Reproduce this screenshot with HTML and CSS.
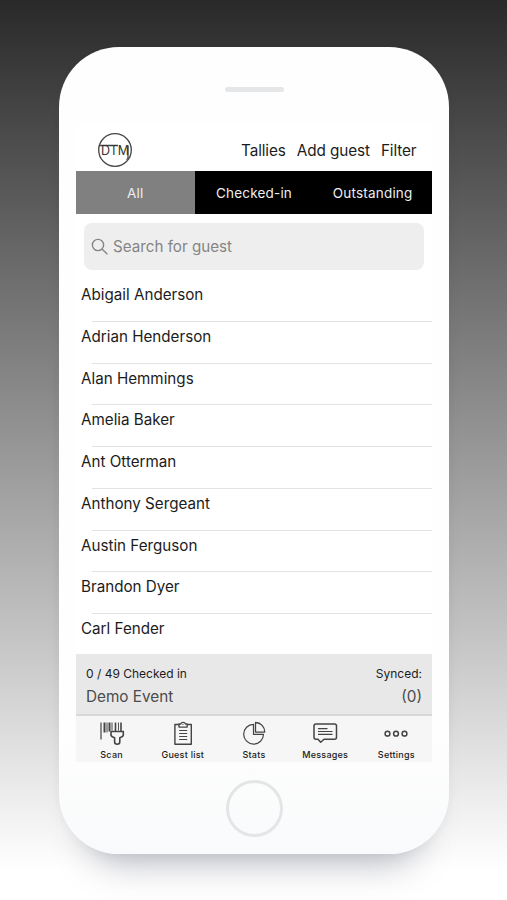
FILE: index.html
```html
<!DOCTYPE html>
<html lang="en">
<head>
<meta charset="utf-8">
<title>Guest list</title>
<link rel="stylesheet" href="styles.css">
</head>
<body>
<main class="phone">
  <div class="speaker"></div>
  <section class="screen">
    <header class="header">
      <svg class="logo" width="36" height="36" viewBox="0 0 36 36">
        <circle cx="18" cy="18" r="16.3"/>
        <path d="M1.800 13.500H21M31 13.500v13l-1.500 1"/>
        <text x="4" y="22.700" textLength="28" lengthAdjust="spacingAndGlyphs">DTM</text>
      </svg>
      <nav class="actions"><a>Tallies</a><a>Add guest</a><a>Filter</a></nav>
    </header>
    <div class="tabs">
      <div class="tab active">All</div>
      <div class="tab">Checked-in</div>
      <div class="tab">Outstanding</div>
    </div>
    <div class="search">
      <svg width="18" height="18" viewBox="0 0 18 18"><circle cx="7" cy="7" r="5.6"/><path d="M11 11l5.4 5.2"/></svg>
      <span>Search for guest</span>
    </div>
    <ul class="guests">
      <li>Abigail Anderson</li>
      <li>Adrian Henderson</li>
      <li>Alan Hemmings</li>
      <li>Amelia Baker</li>
      <li>Ant Otterman</li>
      <li>Anthony Sergeant</li>
      <li>Austin Ferguson</li>
      <li>Brandon Dyer</li>
      <li>Carl Fender</li>
    </ul>
    <div class="status">
      <div class="status-line small"><span>0 / 49 Checked in</span><span>Synced:</span></div>
      <div class="status-line large"><span>Demo Event</span><span>(0)</span></div>
    </div>
    <nav class="toolbar">
      <a class="tool">
        <svg width="26" height="26" viewBox="0 0 26 26">
          <path d="M2 2.500v17" stroke-width="1.200"/>
          <path d="M5.500 2.500v10M10.500 2.500v9" stroke-width="2"/>
          <path d="M8 2.500v10M13 2.500v8" stroke-width="1"/>
          <path d="M16.500 2.500v8.500M22 2.500v8.500" stroke-width="1.600"/>
          <path d="M19.500 2.500v8" stroke-width=".9"/>
          <path d="M12 11.500h12.300v3.500q0 1.500-3.500 2.800v4q0 2.400-2.600 2.400t-2.600-2.400v-4q-3.600-1.300-3.600-2.800z" stroke-width="1.600"/>
        </svg>
        <span>Scan</span>
      </a>
      <a class="tool">
        <svg width="26" height="26" viewBox="0 0 26 26">
          <path d="M9 4.500H4.900v19.800h16.400V4.500H17.200" stroke-width="1.400"/>
          <path d="M9 4h1.800q.3-1.600 2.300-1.600t2.300 1.600h1.800v3.100H9zM13 4v.8" stroke-width="1.300"/>
          <path d="M9.200 10.500h8M9.200 13.500h8M9.200 16.500h8M9.200 19.500h8" stroke-width="1.200"/>
        </svg>
        <span>Guest list</span>
      </a>
      <a class="tool">
        <svg width="26" height="26" viewBox="0 0 26 26">
          <path d="M12.500 4.300A9.900 9.900 0 1 0 22.500 14.300H12.500z" stroke-width="1.200"/>
          <path d="M14.500 2.500v9.600h9.200A9.300 9.300 0 0 0 14.500 2.500z" stroke-width="1.300"/>
        </svg>
        <span>Stats</span>
      </a>
      <a class="tool">
        <svg width="26" height="26" viewBox="0 0 26 26">
          <path d="M4 4h18.500q2 0 2 2v11.300q0 2-2 2H12L8.700 22.300 6 19.300H4q-2 0-2-2V6q0-2 2-2z" stroke-width="1.500"/>
          <path d="M6 8.700h9.500M6 11.500h14.500M6 14.300h14.500" stroke-width="1.200"/>
        </svg>
        <span>Messages</span>
      </a>
      <a class="tool">
        <svg width="26" height="26" viewBox="0 0 26 26">
          <g stroke-width="1.500"><circle cx="4.500" cy="13.700" r="2.400"/><circle cx="13" cy="13.700" r="2.400"/><circle cx="21.500" cy="13.700" r="2.400"/></g>
        </svg>
        <span>Settings</span>
      </a>
    </nav>
  </section>
  <div class="home"></div>
</main>
</body>
</html>
```
FILE: styles.css
```css
* { box-sizing: border-box; }
body {
  margin: 0;
  height: 900px;
  padding-top: 47px;
  overflow: hidden;
  background: linear-gradient(#292929 0, #454545 110px, #8b8b8b 400px, #c2c2c2 630px, #e6e6e6 770px, #fff 870px);
  font-family: Inter, "Liberation Sans", sans-serif;
  color: #1c1c1c;
}
.phone {
  width: 390px;
  height: 807px;
  margin-left: 59px;
  border-radius: 60px;
  background: linear-gradient(#fefefe 85%, #f9fafb);
  box-shadow: 0 38px 36px -30px rgba(70, 75, 95, .4), 0 3px 8px rgba(60, 70, 90, .04);
  display: flex;
  flex-direction: column;
  align-items: center;
}
.speaker { width: 59px; height: 5px; margin-top: 40px; border-radius: 3px; background: #e5e6e8; }
.screen { width: 356px; margin: 32px 0 0; background: #fff; }
.header { height: 47px; padding: 8px 15.5px 0 21px; display: flex; justify-content: space-between; }
.logo { fill: none; stroke: #444; stroke-width: 1.3; }
.logo text { font-size: 12.5px; fill: #333; stroke: none; }
.actions { display: flex; gap: 11px; font-size: 15.3px; line-height: 37px; letter-spacing: -.1px; }
.tabs { height: 43px; display: grid; grid-template: 43px / repeat(3, 1fr); background: #000; color: #eee; font-size: 13.5px; letter-spacing: .2px; line-height: 44px; text-align: center; }
.active { background: #808080; }
.search { height: 47px; margin: 9px 8px 0; padding-left: 7px; border-radius: 8px; background: #eee; display: flex; align-items: center; gap: 4px; color: #858585; font-size: 15.2px; }
.search svg { fill: none; stroke: #858585; stroke-width: 1.4; }
.guests { list-style: none; height: 374px; margin: 10px 0 0; padding: 0; overflow: hidden; }
.guests li { height: 41.75px; padding-left: 5px; font-size: 15.2px; line-height: 30px; background: linear-gradient(#e3e3e3, #e3e3e3) 16px 100% / 100% 1px no-repeat; }
.status { height: 62px; padding: 9px 10px 0; background: #e8e8e8; border-bottom: 2px solid #d8d8d8; }
.status-line { display: flex; justify-content: space-between; }
.small { font-size: 12px; line-height: 21px; }
.large { font-size: 15.3px; line-height: 25px; color: #4b4b4b; }
.toolbar { height: 46px; display: grid; grid-template-columns: repeat(5, 1fr); background: #f6f6f6; }
.tool { display: flex; flex-direction: column; align-items: center; padding-top: 4px; font-size: 9px; font-weight: 500; letter-spacing: .25px; line-height: 17px; }
.tool svg { flex: none; fill: none; stroke: #444; stroke-linejoin: round; }
.home { width: 57px; height: 57px; margin-top: 18px; border: 3px solid #e4e5e7; border-radius: 50%; }
```
